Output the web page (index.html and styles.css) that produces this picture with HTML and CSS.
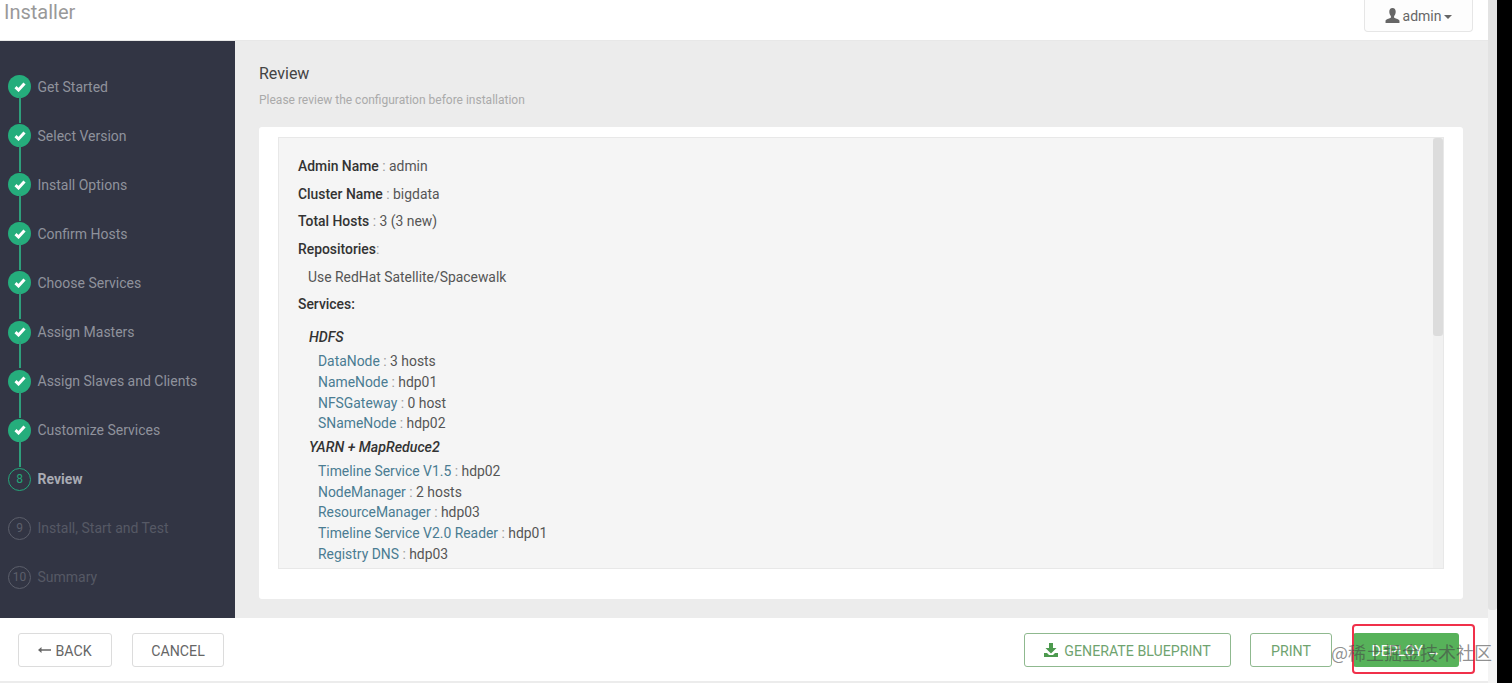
FILE: index.html
```html
<!DOCTYPE html>
<html lang="en">
<head>
<meta charset="utf-8">
<title>Installer</title>
<link rel="stylesheet" href="styles.css">
</head>
<body>
<div class="window">
  <div class="app">
    <header class="topbar">
      <div class="brand">Installer</div>
      <button class="user-btn">
        <svg class="user-icon" viewBox="0 0 14 14"><path d="M7 0C5 0 4 1.500 4 3.500c0 1.800.7 3.200 1.500 4V9C3.500 10 .8 10.300.5 12v2h13v-2c-.3-1.700-3-2-5-3V7.500C9.300 6.700 10 5.300 10 3.500 10 1.500 9 0 7 0z"/></svg>
        <span>admin</span><span class="caret"></span>
      </button>
    </header>
    <div class="middle">
      <nav class="sidebar">
        <ol class="steps">
          <li class="step done"><span class="dot"><svg viewBox="0 0 12 10"><path d="M1.500 5.200l3 2.800 6-6.500" /></svg></span><span class="label">Get Started</span></li>
          <li class="step done"><span class="dot"><svg viewBox="0 0 12 10"><path d="M1.500 5.200l3 2.800 6-6.500" /></svg></span><span class="label">Select Version</span></li>
          <li class="step done"><span class="dot"><svg viewBox="0 0 12 10"><path d="M1.500 5.200l3 2.800 6-6.500" /></svg></span><span class="label">Install Options</span></li>
          <li class="step done"><span class="dot"><svg viewBox="0 0 12 10"><path d="M1.500 5.200l3 2.800 6-6.500" /></svg></span><span class="label">Confirm Hosts</span></li>
          <li class="step done"><span class="dot"><svg viewBox="0 0 12 10"><path d="M1.500 5.200l3 2.800 6-6.500" /></svg></span><span class="label">Choose Services</span></li>
          <li class="step done"><span class="dot"><svg viewBox="0 0 12 10"><path d="M1.500 5.200l3 2.800 6-6.500" /></svg></span><span class="label">Assign Masters</span></li>
          <li class="step done"><span class="dot"><svg viewBox="0 0 12 10"><path d="M1.500 5.200l3 2.800 6-6.500" /></svg></span><span class="label">Assign Slaves and Clients</span></li>
          <li class="step done"><span class="dot"><svg viewBox="0 0 12 10"><path d="M1.500 5.200l3 2.800 6-6.500" /></svg></span><span class="label">Customize Services</span></li>
          <li class="step current"><span class="dot">8</span><span class="label">Review</span></li>
          <li class="step todo"><span class="dot">9</span><span class="label">Install, Start and Test</span></li>
          <li class="step todo"><span class="dot">10</span><span class="label">Summary</span></li>
        </ol>
      </nav>
      <main class="content">
        <h1 class="title">Review</h1>
        <p class="subtitle">Please review the configuration before installation</p>
        <section class="card">
          <div class="panel">
            <div class="summary">
              <p class="row"><b>Admin Name</b> <i class="sep">:</i> admin</p>
              <p class="row"><b>Cluster Name</b> <i class="sep">:</i> bigdata</p>
              <p class="row"><b>Total Hosts</b> <i class="sep">:</i> 3 (3 new)</p>
              <p class="row"><b>Repositories</b><i class="sep">:</i></p>
              <p class="row indent">Use RedHat Satellite/Spacewalk</p>
              <p class="row"><b>Services:</b></p>
              <div class="service">
                <h2 class="service-name">HDFS</h2>
                <ul class="components">
                  <li><a>DataNode</a> <i class="sep">:</i> 3 hosts</li>
                  <li><a>NameNode</a> <i class="sep">:</i> hdp01</li>
                  <li><a>NFSGateway</a> <i class="sep">:</i> 0 host</li>
                  <li><a>SNameNode</a> <i class="sep">:</i> hdp02</li>
                </ul>
              </div>
              <div class="service">
                <h2 class="service-name">YARN + MapReduce2</h2>
                <ul class="components">
                  <li><a>Timeline Service V1.5</a> <i class="sep">:</i> hdp02</li>
                  <li><a>NodeManager</a> <i class="sep">:</i> 2 hosts</li>
                  <li><a>ResourceManager</a> <i class="sep">:</i> hdp03</li>
                  <li><a>Timeline Service V2.0 Reader</a> <i class="sep">:</i> hdp01</li>
                  <li><a>Registry DNS</a> <i class="sep">:</i> hdp03</li>
                </ul>
              </div>
            </div>
            <div class="panel-scroll"><div class="panel-thumb"></div></div>
          </div>
        </section>
      </main>
    </div>
    <footer class="footer">
      <div class="footer-group">
        <button class="btn plain back">
          <svg class="back-arrow" viewBox="0 0 13 8"><path d="M0 4l3.500-3v2.300H13v1.400H3.500V7z"/></svg>
          BACK</button>
        <button class="btn plain cancel">CANCEL</button>
      </div>
      <div class="footer-group">
        <button class="btn outline blueprint">
          <svg class="dl-icon" viewBox="0 0 14 14"><path d="M5 0h4v5h3.500L7 10.500 1.500 5H5zM0 10h3l2 2h4l2-2h3v4H0z"/></svg>
          GENERATE BLUEPRINT</button>
        <button class="btn outline print">PRINT</button>
        <button class="btn primary">DEPLOY &#8594;</button>
      </div>
    </footer>
    <div class="page-bottom"></div>
  </div>
  <div class="page-scroll"><div class="page-thumb"></div></div>
  <div class="black-edge"></div>
  <div class="red-mark"></div>
  <div class="watermark">@稀土掘金技术社区</div>
</div>
</body>
</html>
```
FILE: styles.css
```css
* { box-sizing: border-box; }
html, body { margin: 0; padding: 0; height: 100%; overflow: hidden; background: #000; }
body { font-family: Roboto, "Noto Sans CJK SC", sans-serif; }
.window { position: relative; display: flex; width: 1512px; height: 683px; overflow: hidden; background: #000; }
.app { width: 1488px; height: 683px; display: flex; flex-direction: column; background: #fff; }
.page-scroll { width: 9px; background: #f4f4f4; }
.page-thumb { height: 610px; background: #e3e3e3; border-radius: 0 0 3px 3px; }
.black-edge { flex: 1; background: #000; }

.topbar { height: 41px; flex: none; display: flex; justify-content: space-between; align-items: flex-start; padding: 0 15px 0 4px; background: #fff; border-bottom: 1px solid #e8e8e8; }
.brand { font-size: 20px; line-height: 24px; color: #999; }
.user-btn { display: flex; align-items: center; justify-content: center; width: 109px; height: 32px; padding: 0; background: #fdfdfd; border: 1px solid #e6e6e6; border-top: none; border-radius: 0 0 4px 4px; font: 14px Roboto, sans-serif; color: #666; }
.user-icon { width: 15px; height: 15px; fill: #666; margin-right: 3px; }
.caret { width: 0; height: 0; margin-left: 3px; margin-top: 2px; border: 4px solid transparent; border-top-color: #666; border-bottom: none; }

.middle { flex: 1; min-height: 0; display: flex; }
.sidebar { width: 234.500px; flex: none; background: #323544; padding-top: 21px; }
.steps { list-style: none; margin: 0; padding: 0 0 0 8px; }
.step { position: relative; display: flex; align-items: center; height: 49.100px; font-size: 14px; }
.step:not(:last-child)::after { content: ""; position: absolute; left: 11px; top: 34px; width: 2px; height: 27px; background: #2f9e7b; }
.step.current::after, .step.todo::after { display: none; }
.dot { flex: none; display: flex; align-items: center; justify-content: center; width: 23px; height: 23px; border-radius: 50%; font-size: 12px; }
.dot svg { width: 12px; height: 10px; fill: none; stroke: #fff; stroke-width: 3; }
.label { margin-left: 6.500px; color: #8f929c; }
.done .dot { background: #25ad7c; }
.current .dot { border: 1.500px solid #25a67a; color: #25a67a; }
.current .label { font-weight: 700; color: #a9abb3; }
.todo .dot { border: 1.500px solid #5c5f6b; color: #5c5f6b; }
.todo .label { color: #565965; }

.content { flex: 1; min-width: 0; background: #ececec; padding: 24px 25px 19px 24.500px; display: flex; flex-direction: column; }
.title { margin: 0; font-size: 16px; line-height: 18px; font-weight: 400; color: #444; }
.subtitle { margin: 10px 0 0; font-size: 12px; line-height: 14px; color: #aaa; }
.card { flex: 1; min-height: 0; margin-top: 20px; padding: 10px 19px 30px 19px; background: #fff; border-radius: 3px; }
.panel { position: relative; height: 100%; overflow: hidden; background: #f5f5f5; border: 1px solid #e8e8e8; }
.summary { padding: 18px 19px 0; font-size: 13.900px; color: #555; }
.row { margin: 0; line-height: 20px; height: 27.700px; }
.row b { font-weight: 500; color: #333; }
.sep { font-style: normal; color: #999; }
.indent { padding-left: 10px; }
.service { padding-left: 11px; }
.service + .service { margin-top: 3px; }
.service-name { margin: 0; font-size: 14.200px; line-height: 20px; font-weight: 500; font-style: italic; color: #333; padding-bottom: 4px; }
.service:first-of-type .service-name { margin-top: 5px; }
.components { list-style: none; margin: 0; padding: 0 0 0 9px; }
.components li { line-height: 20.700px; }
.components a { color: #4a7c92; }
.panel-scroll { position: absolute; top: 0; right: 0; width: 10px; height: 100%; background: #f1f1f1; }
.panel-thumb { width: 10px; height: 198px; background: #dcdcdc; border-radius: 3px; }

.footer { height: 63px; flex: none; display: flex; justify-content: space-between; align-items: flex-start; padding: 15px 29px 0 18px; background: #fff; }
.page-bottom { height: 2px; flex: none; background: #ececec; }
.footer-group { display: flex; gap: 19px; }
.btn { display: flex; align-items: center; justify-content: center; height: 34px; padding: 1px 0 0; border-radius: 3px; font: 14.200px Roboto, sans-serif; background: #fff; }
.plain { border: 1px solid #dcdcdc; color: #666; }
.back { width: 94px; gap: 4px; }
.cancel { width: 92px; margin-left: 1px; }
.back-arrow { width: 13px; height: 8px; fill: #666; margin-top: -2px; }
.outline { border: 1px solid #8fb98f; color: #6fa36f; }
.blueprint { width: 207px; gap: 6px; }
.print { width: 82px; margin-right: 2px; }
.primary { width: 106px; border: none; background: #57b25a; color: #fff; }
.dl-icon { width: 14px; height: 14px; fill: #4d9a4f; margin-top: -2px; }

.red-mark { position: absolute; left: 1352px; top: 624px; width: 123px; height: 50px; border: 2px solid #f0304a; border-radius: 4px; }
.watermark { position: absolute; left: 1331px; top: 641px; font-family: "Noto Sans CJK SC", sans-serif; font-size: 18px; line-height: 22px; color: rgba(70, 70, 70, .6); white-space: nowrap; }
```
